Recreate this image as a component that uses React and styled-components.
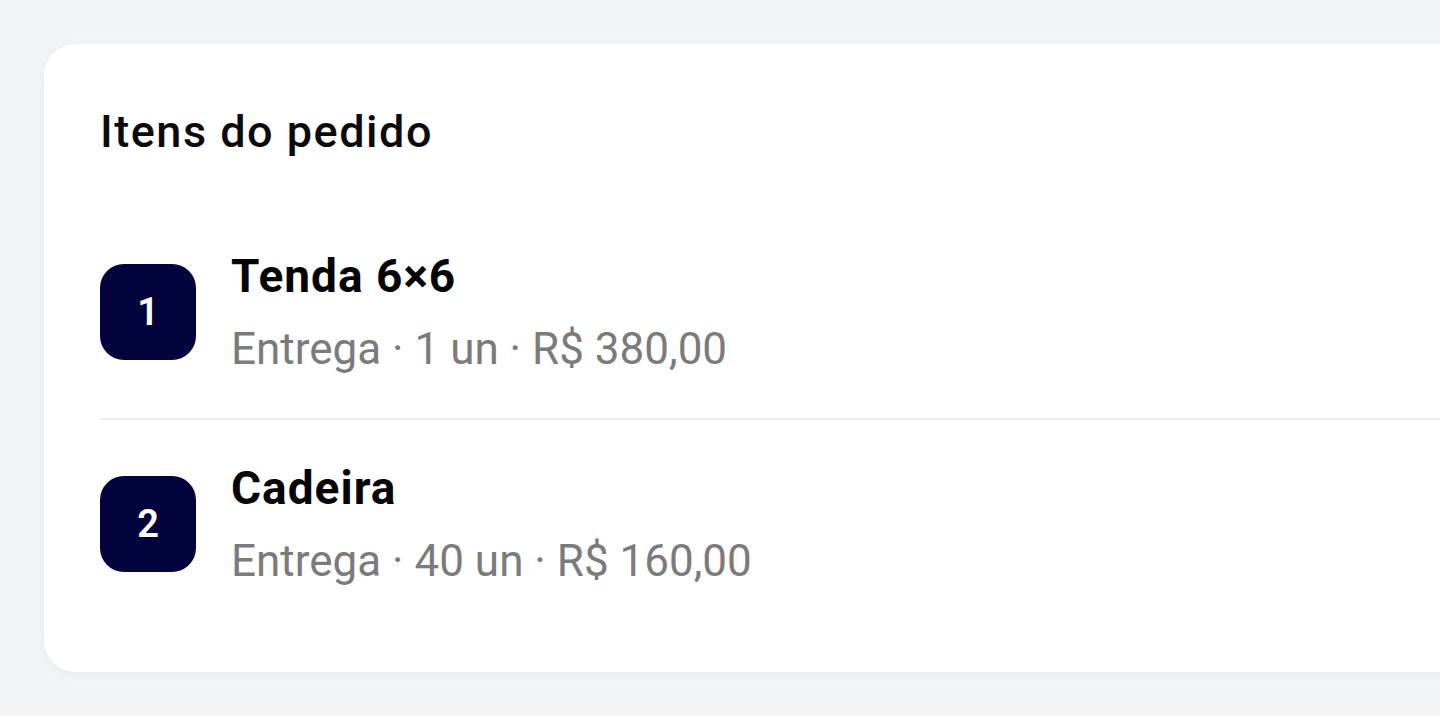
import React from 'react'
import styled, { createGlobalStyle } from 'styled-components'

const GlobalStyle = createGlobalStyle`
  html, body {
    margin: 0;
    padding: 0;
    background: #f3f4f6;
    overflow: hidden;
    font-family: Roboto, "Noto Sans", sans-serif;
  }
`;

const Page = styled.div`
  min-height: 716px;
  padding: 44px 0 0 44px;
  box-sizing: border-box;
`;

const Card = styled.section`
  background: #fff;
  border-radius: 32px;
  margin-right: -80px;
  padding: 62px 0 42px 56px;
  box-shadow: 0 2px 14px rgba(15, 23, 42, 0.05);
`;

const Title = styled.h2`
  margin: 0 0 50px;
  font-size: 45px;
  line-height: 52px;
  font-weight: 500;
  letter-spacing: 1.5px;
  color: #0b0b0b;
`;

const List = styled.div`
  display: flex;
  flex-direction: column;
`;

const Row = styled.div`
  display: flex;
  align-items: center;
  gap: 35px;
  padding: 41px 0 43px;
  border-bottom: ${p => (p.$last ? 'none' : '2px solid #eeeeef')};
`;

const Badge = styled.div`
  width: 96px;
  height: 96px;
  flex: none;
  border-radius: 24px;
  background: #03033d;
  color: #fff;
  display: flex;
  align-items: center;
  justify-content: center;
  font-size: 38px;
  font-weight: 600;
`;

const Info = styled.div`
  display: flex;
  flex-direction: column;
  gap: 19px;
`;

const Name = styled.div`
  font-size: 46px;
  line-height: 55px;
  font-weight: 700;
  letter-spacing: 1px;
  color: #050505;
`;

const Meta = styled.div`
  font-size: 44px;
  line-height: 52px;
  font-weight: 400;
  color: #7b7b7b;
`;

const items = [
  { name: 'Tenda 6×6', qty: '1 un', price: 'R$ 380,00' },
  { name: 'Cadeira', qty: '40 un', price: 'R$ 160,00' },
]

export default function App() {
  return (
    <>
      <GlobalStyle />
      <Page>
        <Card>
          <Title>Itens do pedido</Title>
          <List>
            {items.map((item, i) => (
              <Row key={i} $last={i === items.length - 1}>
                <Badge>{i + 1}</Badge>
                <Info>
                  <Name>{item.name}</Name>
                  <Meta>Entrega · {item.qty} · {item.price}</Meta>
                </Info>
              </Row>
            ))}
          </List>
        </Card>
      </Page>
    </>
  )
}
